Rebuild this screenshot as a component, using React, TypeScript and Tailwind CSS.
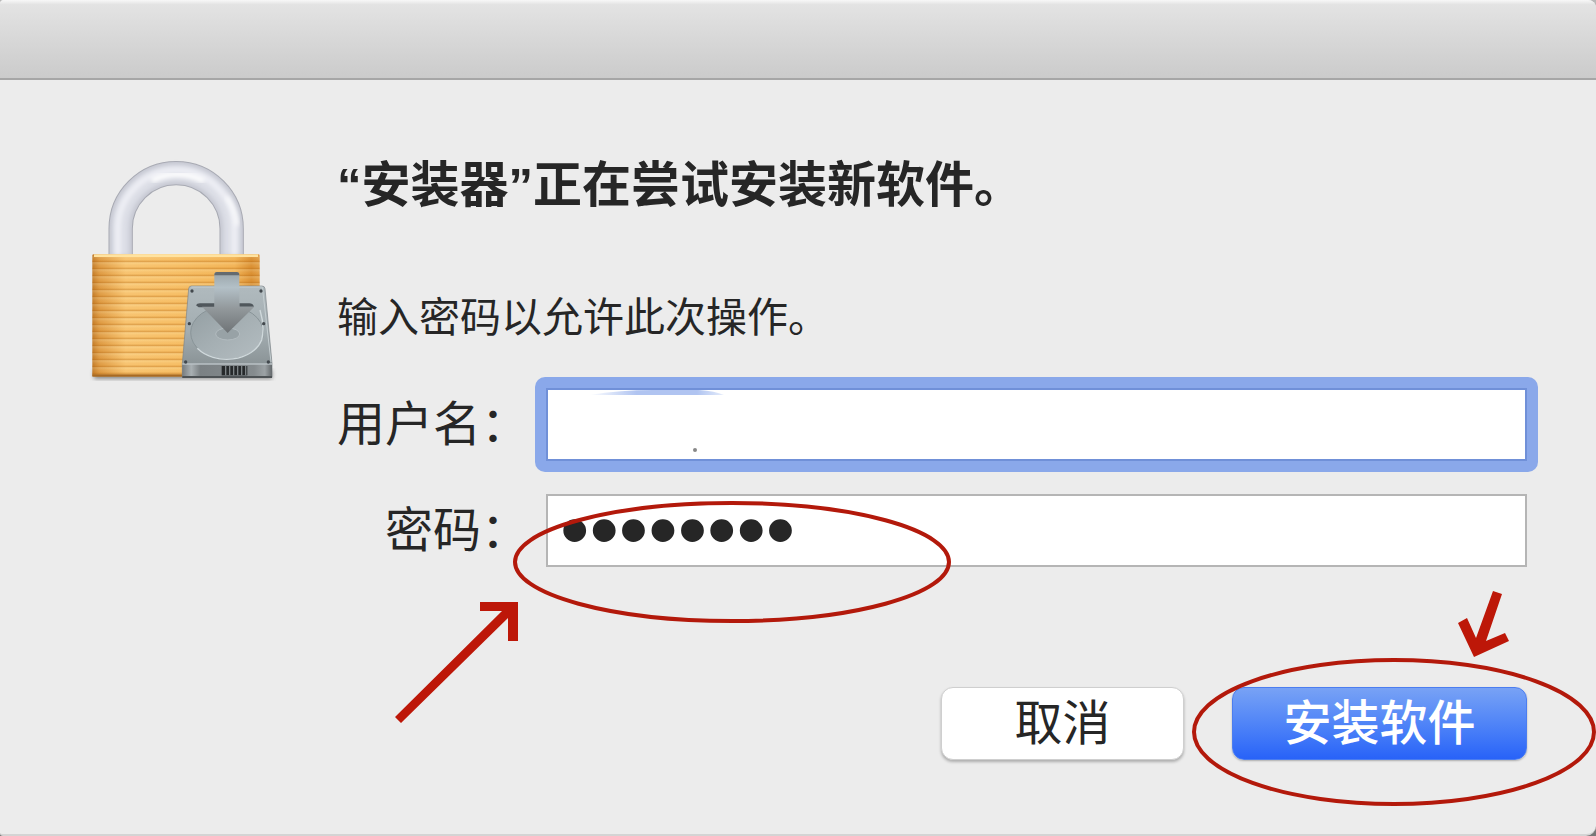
import React from "react";

const LockIcon = () => {
  return (
    <svg
      viewBox="0 0 630 720"
      className="w-[210px] h-[240px] shrink-0"
      aria-hidden="true"
    >
      <defs>
        <linearGradient id="gold" x1="0" x2="1" y1="0" y2="0">
          <stop offset="0" stopColor="#c07a2a" />
          <stop offset="0.04" stopColor="#dd9a45" />
          <stop offset="0.2" stopColor="#f9c775" />
          <stop offset="0.5" stopColor="#f8c26b" />
          <stop offset="0.85" stopColor="#f3b65a" />
          <stop offset="0.95" stopColor="#d98f33" />
          <stop offset="1" stopColor="#e2a04a" />
        </linearGradient>
        <linearGradient id="groove" x1="0" x2="0" y1="0" y2="1">
          <stop offset="0" stopColor="#fff0c0" stopOpacity="0.2" />
          <stop offset="0.5" stopColor="#e79a35" stopOpacity="0.1" />
          <stop offset="0.8" stopColor="#b8690f" stopOpacity="0.38" />
          <stop offset="1" stopColor="#fff0c0" stopOpacity="0.25" />
        </linearGradient>
        <pattern
          id="stripes"
          x="0"
          y="318"
          width="600"
          height="21"
          patternUnits="userSpaceOnUse"
        >
          <rect width="600" height="21" fill="url(#groove)" />
        </pattern>
        <linearGradient id="metal" x1="0" x2="0" y1="0" y2="1">
          <stop offset="0" stopColor="#b0babe" />
          <stop offset="0.5" stopColor="#a3adb1" />
          <stop offset="0.85" stopColor="#8b9497" />
          <stop offset="1" stopColor="#7c8487" />
        </linearGradient>
        <linearGradient id="disc" x1="0" x2="1" y1="0" y2="1">
          <stop offset="0" stopColor="#939ea2" />
          <stop offset="0.5" stopColor="#a5afb3" />
          <stop offset="1" stopColor="#b4bdc1" />
        </linearGradient>
        <linearGradient id="arrow" x1="0" x2="0" y1="0" y2="1">
          <stop offset="0" stopColor="#9aa5aa" />
          <stop offset="0.25" stopColor="#b3c0c7" />
          <stop offset="0.6" stopColor="#92989b" />
          <stop offset="1" stopColor="#6f7477" />
        </linearGradient>
        <linearGradient id="front" x1="0" x2="1" y1="0" y2="0">
          <stop offset="0" stopColor="#777c7f" />
          <stop offset="0.1" stopColor="#a9b0b3" />
          <stop offset="0.2" stopColor="#7b8184" />
          <stop offset="0.8" stopColor="#858b8e" />
          <stop offset="0.92" stopColor="#9ca2a5" />
          <stop offset="1" stopColor="#64696c" />
        </linearGradient>
        <filter id="soft" x="-20%" y="-20%" width="140%" height="140%">
          <feGaussianBlur stdDeviation="6" />
        </filter>
      </defs>

      <rect x="42" y="660" width="534" height="26" fill="#555" opacity="0.7" filter="url(#soft)" />

      {/* shackle */}
      <g fill="none">
        <path d="M122 316V236A166 166 0 0 1 455 236V316" stroke="#a5a7b0" strokeWidth="73" />
        <path d="M122 316V236A166 166 0 0 1 455 236V316" stroke="#c6c8d2" strokeWidth="67" />
        <path d="M122 316V236A166 166 0 0 1 455 236V316" stroke="#dcdee6" strokeWidth="50" filter="url(#soft)" />
        <path d="M114 316V236A174 174 0 0 1 463 236V316" stroke="#eeeff5" strokeWidth="18" filter="url(#soft)" />
        <path d="M216 92A166 166 0 0 1 372 94" stroke="#fff" strokeWidth="15" filter="url(#soft)" />
        <path d="M440 140Q468 180 472 226" stroke="#fff" strokeWidth="9" filter="url(#soft)" />
      </g>

      {/* body */}
      <rect x="37" y="313" width="502" height="366" rx="4" fill="url(#gold)" />
      <rect x="37" y="319" width="502" height="354" fill="url(#stripes)" />
      <rect x="42" y="313" width="492" height="8" fill="#ffe3a0" />
      <rect x="37" y="673" width="502" height="7" fill="#a96a22" />

      {/* drive */}
      <path d="M334 408H546Q554 408 555 416L576 640V682H307V640L326 416Q327 408 334 408Z" fill="url(#metal)" stroke="#7d8589" strokeWidth="2" />
      <path d="M334 411H547L573 636" fill="none" stroke="#c4cdd0" strokeWidth="3" />
      <ellipse cx="441" cy="548" rx="109" ry="80" fill="url(#disc)" stroke="#899498" strokeWidth="3" />
      <path d="M352 595A109 80 0 0 0 545 570Q555 530 540 480" fill="none" stroke="#d0d9dc" strokeWidth="4" />
      <ellipse cx="443" cy="552" rx="36" ry="18" fill="#98a2a6" stroke="#b3bcc0" strokeWidth="3" />
      <path d="M307 642H576V682H307Z" fill="url(#front)" />
      <path d="M307 642H576" stroke="#b9c1c4" strokeWidth="4" />
      <path d="M425 648H502V676H425Z" fill="#26292b" />
      <path d="M437 648V676M449 648V676M461 648V676M473 648V676M485 648V676M497 648V676" stroke="#7d8386" strokeWidth="4" />
      <path d="M307 678H576V684H307Z" fill="#4d5255" />
      <g fill="#42484d">
        <circle cx="336" cy="423" r="5" />
        <circle cx="543" cy="423" r="5" />
        <circle cx="328" cy="521" r="5" />
        <circle cx="551" cy="521" r="5" />
        <circle cx="317" cy="636" r="5" />
        <circle cx="565" cy="636" r="5" />
      </g>

      {/* arrow */}
      <path d="M348 466Q350 460 360 460H404V472H356ZM478 460H508Q518 460 522 470H478Z" fill="#50575c" />
      <path d="M403 374Q403 367 410 367H471Q478 367 478 374V470H523L443 549L366 470H403Z" fill="url(#arrow)" />
      <path d="M403 376Q403 366 411 366H470Q478 366 478 376Z" fill="#646b70" />
    </svg>
  );
};

const PasswordMark = () => {
  return (
    <svg
      viewBox="390 494 564 232"
      className="absolute -left-[145px] top-[11px] w-[564px] h-[232px] max-w-none pointer-events-none"
      aria-hidden="true"
    >
      <ellipse cx="732" cy="562" rx="217" ry="59" fill="none" stroke="#b3190b" strokeWidth="4" />
      <path d="M480 602H518V641H508V618L401 723L395 717L502 611H480Z" fill="#bd1708" />
    </svg>
  );
};

const InstallMark = () => {
  return (
    <svg
      viewBox="1190 587 406 222"
      className="absolute -left-[42px] -top-[100px] w-[406px] h-[222px] max-w-none pointer-events-none"
      aria-hidden="true"
    >
      <ellipse cx="1394" cy="732" rx="200" ry="72" fill="none" stroke="#b3190b" strokeWidth="4" />
      <path d="M1493 591L1502 594L1486 641L1505 633L1509 641L1474 657L1458 623L1467 618L1476 638Z" fill="#bd1708" />
    </svg>
  );
};

const App = () => {
  return (
    <div className="min-h-screen flex flex-col bg-linear-to-b from-[#b8b8b8] to-[#777777]">
      <main className="flex-1 flex flex-col overflow-hidden rounded-tl-[4px] rounded-tr-[8px] rounded-bl-[3px] rounded-br-[10px] border-b-2 border-[#d4d4d4] bg-[#ececec] text-[#262626] font-['Liberation_Sans','Noto_Sans_CJK_SC',sans-serif]">
        <header className="h-20 border-b-2 border-b-[#a6a6a6] bg-linear-to-b from-[#f8f8f8] from-0% via-[#e3e3e3] via-6% to-[#cbcbcb]" />
        <div className="flex-1 flex items-start pl-20 pr-[58px] pt-[70px]">
          <LockIcon />
          <form className="flex-1 ml-[47px]" onSubmit={(e) => e.preventDefault()}>
            <h1 className="text-[49px] leading-[70px] font-bold">
              “安装器”正在尝试安装新软件。
            </h1>
            <p className="mt-[74px] text-[41px] leading-[48px]">
              输入密码以允许此次操作。
            </p>
            <div className="mt-[35px] flex items-center">
              <label
                htmlFor="username"
                className="w-[198px] shrink-0 pr-[6px] text-right text-[48px] leading-[64px] whitespace-nowrap"
              >
                用户名：
              </label>
              <div className="relative flex-1 flex p-[11px] rounded-[10px] bg-[#8aa8ea]">
                <input
                  id="username"
                  type="text"
                  className="w-full h-[73px] px-4 text-[41px] bg-white border-2 border-[#7090d8] outline-none"
                />
                <svg
                  viewBox="0 0 140 64"
                  className="absolute left-[52px] top-[13px] w-[140px] h-16 pointer-events-none"
                  aria-hidden="true"
                >
                  <defs>
                    <linearGradient id="edge" x1="0" x2="1" y1="0" y2="0">
                      <stop offset="0" stopColor="#ffffff" />
                      <stop offset="0.35" stopColor="#b0c4f1" />
                      <stop offset="0.8" stopColor="#b0c4f1" />
                      <stop offset="1" stopColor="#e6edfb" />
                    </linearGradient>
                  </defs>
                  <path d="M2 5Q34 0 66 0H112Q128 1 137 5Z" fill="url(#edge)" />
                  <circle cx="108" cy="60" r="2" fill="#888" />
                </svg>
              </div>
            </div>
            <div className="mt-[11px] flex items-center">
              <label
                htmlFor="password"
                className="w-[198px] shrink-0 pr-[6px] text-right text-[48px] leading-[64px] whitespace-nowrap"
              >
                密码：
              </label>
              <div className="relative flex-1 flex p-[11px]">
                <input
                  id="password"
                  type="password"
                  defaultValue="12345678"
                  className="w-full h-[73px] px-3 pb-[3px] text-[84px] leading-[64px] bg-white border-2 border-[#b5b5b5] outline-none"
                />
                <PasswordMark />
              </div>
            </div>
            <div className="mt-[109px] pr-[11px] flex justify-end gap-12 text-[48px] leading-[64px]">
              <button
                type="button"
                className="w-[243px] h-[73px] flex items-center justify-center rounded-xl bg-white border border-[#cfcfcf] shadow-[0_2px_3px_#00000044]"
              >
                取消
              </button>
              <div className="relative">
                <button
                  type="submit"
                  className="w-[295px] h-[73px] flex items-center justify-center rounded-xl text-white font-medium bg-linear-to-b from-[#78a2f5] to-[#2862f8] border border-[#4b7df0] shadow-[0_1px_2px_#00000044]"
                >
                  安装软件
                </button>
                <InstallMark />
              </div>
            </div>
          </form>
        </div>
      </main>
    </div>
  );
};

export default App;
